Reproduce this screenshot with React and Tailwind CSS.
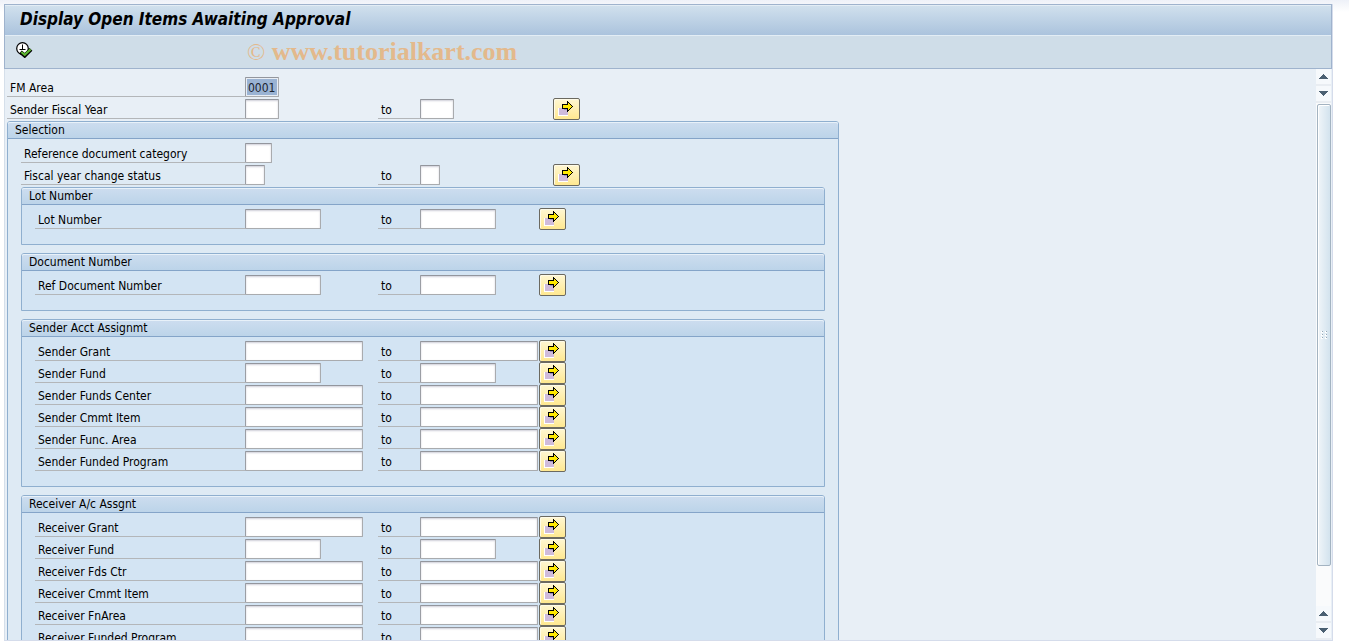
import React, { useState } from 'react';
import clsx from 'clsx';

const SENDER_ROWS = [
  { id: 'sgrant', label: 'Sender Grant', size: 'long' },
  { id: 'sfund', label: 'Sender Fund', size: 'medium' },
  { id: 'scenter', label: 'Sender Funds Center', size: 'long' },
  { id: 'scmmt', label: 'Sender Cmmt Item', size: 'long' },
  { id: 'sfunc', label: 'Sender Func. Area', size: 'long' },
  { id: 'sprog', label: 'Sender Funded Program', size: 'long' },
];

const RECEIVER_ROWS = [
  { id: 'rgrant', label: 'Receiver Grant', size: 'long' },
  { id: 'rfund', label: 'Receiver Fund', size: 'medium' },
  { id: 'rcenter', label: 'Receiver Fds Ctr', size: 'long' },
  { id: 'rcmmt', label: 'Receiver Cmmt Item', size: 'long' },
  { id: 'rfunc', label: 'Receiver FnArea', size: 'long' },
  { id: 'rprog', label: 'Receiver Funded Program', size: 'long' },
];

const FIELD_WIDTHS = {
  single: 'w-[20px]',
  short: 'w-[27px]',
  year: 'w-[34px]',
  medium: 'w-[76px]',
  long: 'w-[118px]',
};

// Labels get shorter the deeper the row is nested, so the fields stay aligned
const LABEL_WIDTHS = ['w-[238px]', 'w-[224px]', 'w-[210px]'];

const ExecuteIcon = () => (
  <svg width="17" height="16" viewBox="0 0 17 16" fill="none">
    <circle cx="6.5" cy="6.5" r="5.8" fill="#fff" stroke="#000" strokeWidth="1.2" />
    <path d="M6.5 2.5v5M3.5 7.5h6" stroke="#000" />
    <path d="M4.5 10 L8.7 13.6 L15 7.4" stroke="#000" strokeWidth="4" />
    <path d="M5.3 10 L8.7 12.8 L14.6 7.4" stroke="#5cb531" strokeWidth="2.2" />
  </svg>
);

const MultiSelectIcon = () => (
  <svg width="15" height="15" viewBox="0 0 15 15" shapeRendering="crispEdges">
    <path d="M0 7h10v8H0z" fill="#fff" />
    <path d="M1 7h9v7H1z" fill="#cfbbdb" />
    <path d="M6 7h4v2H6z" fill="#9c8fc0" />
    <path
      d="M4 3h5V0h1v1h1v1h1v1h1v1h1v1h1v1h-1v1h-1v1h-1v1h-1v1h-1v1H9V8H4z"
      fill="#000"
    />
    <path d="M5 4h5V2h1v1h1v1h1v1h1v1h-1v1h-1v1h-1v1h-1V7H5z" fill="#ffe800" />
  </svg>
);

const Field = ({ size, className, ...props }) => (
  <input
    type="text"
    className={clsx(
      'h-5 block border border-t-[#93969d] border-l-[#9b9ea4] border-r-[#a9abae] border-b-[#a9abae] rounded-[1px] outline-none px-[2px] pt-px text-xs',
      FIELD_WIDTHS[size],
      className || 'bg-white shadow-[inset_0_1px_2px_#cfcfd8]'
    )}
    {...props}
  />
);

const Row = ({ id, label, size, depth = 0, children }) => (
  <div className="flex h-[22px] items-center">
    <label
      htmlFor={id}
      className={clsx('h-5 shrink-0 border-b border-[#b3b6b9] pl-[3px] leading-[22px] whitespace-nowrap', LABEL_WIDTHS[depth])}
    >
      {label}
    </label>
    {children || <Field id={id} size={size} />}
  </div>
);

// Row with a from/to pair and the multiple selection button
const RangeRow = ({ id, label, size, depth = 0 }) => (
  <Row id={id} label={label} depth={depth}>
    <div className="w-[133px] shrink-0">
      <Field id={id} size={size} />
    </div>
    <label htmlFor={`${id}-to`} className="h-5 w-[42px] shrink-0 border-b border-[#b3b6b9] pl-[3px] leading-[22px]">
      to
    </label>
    <div className={clsx('shrink-0', depth === 2 ? 'w-[119px]' : 'w-[133px]')}>
      <Field id={`${id}-to`} size={size} />
    </div>
    <button
      type="button"
      aria-label={`Multiple selection for ${label}`}
      className="flex h-[22px] w-[27px] shrink-0 justify-center rounded-[2px] border border-[#6b6960] bg-linear-to-b from-[#fff7d2] to-[#ffe890] pt-[2px] pr-[3px] shadow-[inset_1px_1px_0_#fffbe8]"
    >
      <MultiSelectIcon />
    </button>
  </Row>
);

const Group = ({ title, outer, children }) => (
  <section
    className={clsx(
      'rounded-t-[3px] border border-[#8fafcf]',
      outer ? 'mt-px w-full max-w-[832px] bg-[#deeaf4]' : 'bg-[#d3e4f3]'
    )}
  >
    <h2 className="h-[17px] rounded-t-[2px] border-b border-[#84a4c8] bg-linear-to-b from-[#cdddef] to-[#bcd4e9] pl-[7px] leading-4 shadow-[inset_0_1px_0_#e8f1f9]">
      {title}
    </h2>
    <div className="px-[13px] pt-[3px] pb-[14px]">{children}</div>
  </section>
);

const ScrollButton = ({ up }) => (
  <button
    type="button"
    aria-label={up ? 'Scroll up' : 'Scroll down'}
    className="flex h-[17px] w-full shrink-0 items-center justify-center border-b-2 border-[#e9edf2] bg-[#f6f9fc]"
  >
    <svg width="9" height="5" viewBox="0 0 9 5" shapeRendering="crispEdges">
      <path
        d={up ? 'M4 0h1v1h1v1h1v1h1v1h1v1H0V4h1V3h1V2h1V1h1z' : 'M0 0h9v1H8v1H7v1H6v1H5v1H4V4H3V3H2V2H1V1H0z'}
        fill="#4b6072"
      />
    </svg>
  </button>
);

const ScrollBar = () => (
  <div className="mr-px flex w-[15px] shrink-0 flex-col bg-[#fafbfc]">
    <ScrollButton up />
    <ScrollButton />
    <div className="min-h-0 flex-1 pt-px pl-px">
      <div className="flex h-[92%] flex-col items-center justify-center rounded-[2px] border border-[#a3b3c1] bg-linear-to-r from-[#f0f5f9] to-[#d3e3ee] shadow-[inset_1px_1px_0_#fff]">
        <svg width="7" height="8" viewBox="0 0 7 8" shapeRendering="crispEdges">
          <path d="M0 0h2v2H0zM4 0h2v2H4zM0 3h2v2H0zM4 3h2v2H4zM0 6h2v2H0zM4 6h2v2H4z" fill="#fff" />
          <path d="M1 0h1v1H1zM5 0h1v1H5zM1 3h1v1H1zM5 3h1v1H5zM1 6h1v1H1zM5 6h1v1H5z" fill="#94a7b7" />
        </svg>
      </div>
    </div>
    <ScrollButton up />
    <ScrollButton />
  </div>
);

const App = () => {
  const [fmArea, setFmArea] = useState('0001');

  return (
    <div className="h-screen overflow-hidden bg-linear-to-b from-[#eef1f8] to-white to-[12px] pt-1 pr-4 pb-[2px] pl-1 font-['DejaVu_Sans_Condensed','DejaVu_Sans',sans-serif] text-xs text-black [font-stretch:condensed]">
      <div className="flex h-full flex-col border-r border-b border-[#d5dceb] bg-[#e8eff6]">
        <header className="shrink-0 border border-[#9fb3cd]">
          <h1 className="h-[31px] border-t border-b border-[#e3edf5] bg-linear-to-b from-[#d0e0ed] to-[#abc3dd] pl-[15px] text-[17px] leading-[26px] font-bold whitespace-nowrap italic">
            Display Open Items Awaiting Approval
          </h1>
          <div className="flex h-8 items-center bg-[#cfdde8] pl-[11px]">
            <button type="button" aria-label="Execute" className="w-[231px] shrink-0 pb-1">
              <ExecuteIcon />
            </button>
            <p className="font-['Liberation_Serif',serif] text-[26px] leading-8 font-bold whitespace-nowrap text-[#e3b98c]">
              <span className="text-2xl font-normal">©</span> www.tutorialkart.com
            </p>
          </div>
        </header>

        <div className="flex min-h-0 flex-1">
          <main className="min-w-0 flex-1 overflow-hidden border-l border-[#d5dfea] pt-[7px] pl-[2px]">
            <Row id="fmarea" label="FM Area">
              <Field
                id="fmarea"
                size="year"
                value={fmArea}
                maxLength={4}
                onChange={e => setFmArea(e.target.value)}
                className="bg-[#9ab3d3] text-[#1c2430] shadow-[inset_0_0_0_1px_#e8edf4]"
              />
            </Row>
            <RangeRow id="year" label="Sender Fiscal Year" size="year" />

            <Group title="Selection" outer>
              <Row id="refcat" label="Reference document category" size="short" depth={1} />
              <RangeRow id="status" label="Fiscal year change status" size="single" depth={1} />

              <div className="space-y-2 pt-px">
                <Group title="Lot Number">
                  <RangeRow id="lot" label="Lot Number" size="medium" depth={2} />
                </Group>
                <Group title="Document Number">
                  <RangeRow id="refdoc" label="Ref Document Number" size="medium" depth={2} />
                </Group>
                <Group title="Sender Acct Assignmt">
                  {SENDER_ROWS.map(row => <RangeRow key={row.id} {...row} depth={2} />)}
                </Group>
                <Group title="Receiver A/c Assgnt">
                  {RECEIVER_ROWS.map(row => <RangeRow key={row.id} {...row} depth={2} />)}
                </Group>
              </div>
            </Group>
          </main>
          <ScrollBar />
        </div>
      </div>
    </div>
  );
};

export default App;
